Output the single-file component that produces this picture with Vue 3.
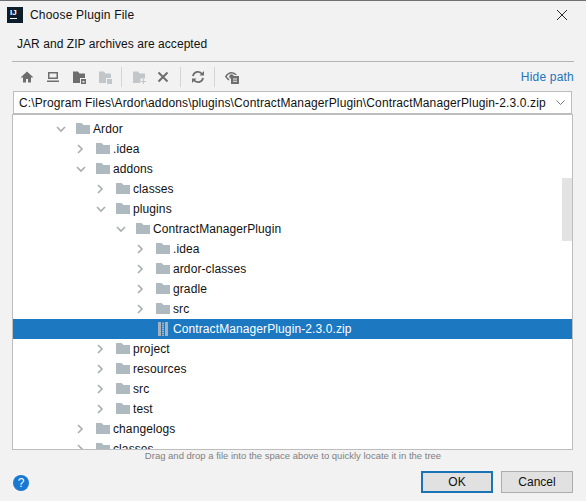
<script setup>
import { ref } from "vue";

const rows = ref([
  { name: "Ardor", depth: 0, open: true },
  { name: ".idea", depth: 1 },
  { name: "addons", depth: 1, open: true },
  { name: "classes", depth: 2 },
  { name: "plugins", depth: 2, open: true },
  { name: "ContractManagerPlugin", depth: 3, open: true },
  { name: ".idea", depth: 4 },
  { name: "ardor-classes", depth: 4 },
  { name: "gradle", depth: 4 },
  { name: "src", depth: 4 },
  { name: "ContractManagerPlugin-2.3.0.zip", depth: 4, file: true, selected: true },
  { name: "project", depth: 2 },
  { name: "resources", depth: 2 },
  { name: "src", depth: 2 },
  { name: "test", depth: 2 },
  { name: "changelogs", depth: 1 },
  { name: "classes", depth: 1 },
]);

const pathValue = "C:\\Program Files\\Ardor\\addons\\plugins\\ContractManagerPlugin\\ContractManagerPlugin-2.3.0.zip";

function rowIndent(row) {
  return { paddingLeft: 53 + row.depth * 20 + "px" };
}
</script>

<template>
  <div class="dialog">
    <header class="titlebar">
      <span class="logo"><span class="logo-text">IJ</span><span class="logo-bar"></span></span>
      <span class="title">Choose Plugin File</span>
      <svg class="close" width="12" height="12" viewBox="0 0 12 12">
        <path d="M1 1L11 11M11 1L1 11" stroke="#2b2b2b" stroke-width="1" fill="none" />
      </svg>
    </header>

    <p class="desc">JAR and ZIP archives are accepted</p>
    <div class="rule"></div>

    <div class="toolbar">
      <div class="tools">
        <button class="tool">
          <svg width="16" height="16" viewBox="0 0 16 16"><path d="M8 2.5L1.5 8.5H4V13.5H7V10H9V13.5H12V8.5H14.5Z" fill="#6e6e6e" /></svg>
        </button>
        <button class="tool">
          <svg width="16" height="16" viewBox="0 0 16 16"><path d="M3 3H13V10H3ZM4.5 4.5V8.5H11.5V4.5ZM2 11.5H14V13H2Z" fill="#6e6e6e" fill-rule="evenodd" /></svg>
        </button>
        <button class="tool">
          <svg width="16" height="16" viewBox="0 0 16 16"><path d="M2 2.5H7L8.5 4.5H14V9H9V14H2Z" fill="#6e6e6e" /><path d="M10 10H15V15H10ZM11.5 12V13.5H13.5V12Z" fill="#6e6e6e" fill-rule="evenodd" /></svg>
        </button>
        <button class="tool before-sep">
          <svg width="16" height="16" viewBox="0 0 16 16"><path d="M2 2.5H7L8.5 4.5H14V9H9V14H2Z" fill="#c2c6c9" /><path d="M10 10H15V15H10Z" fill="#c2c6c9" /></svg>
        </button>
        <span class="sep"></span>
        <button class="tool tight">
          <svg width="16" height="16" viewBox="0 0 16 16"><path d="M2 2.5H7L8.5 4.5H14V9.5H9.5V14H2Z" fill="#c2c6c9" /><path d="M12 10V12H10V13H12V15H13V13H15V12H13V10Z" fill="#c2c6c9" /></svg>
        </button>
        <button class="tool">
          <svg width="16" height="16" viewBox="0 0 16 16"><path d="M3.5 3.5L12.5 12.5M12.5 3.5L3.5 12.5" stroke="#6e6e6e" stroke-width="2" fill="none" /></svg>
        </button>
        <span class="sep"></span>
        <button class="tool before-sep">
          <svg width="16" height="16" viewBox="0 0 16 16"><path d="M3 7.2A5 5 0 0 1 12.2 5.2" stroke="#6e6e6e" stroke-width="1.8" fill="none" /><path d="M9.5 6.5H14V2Z" fill="#6e6e6e" /><path d="M13 8.8A5 5 0 0 1 3.8 10.8" stroke="#6e6e6e" stroke-width="1.8" fill="none" /><path d="M6.5 9.5H2V14Z" fill="#6e6e6e" /></svg>
        </button>
        <span class="sep"></span>
        <button class="tool">
          <svg width="16" height="16" viewBox="0 0 16 16"><path d="M1 7.5C2.5 4.5 5 3 7.5 3C9.5 3 11.5 4 13 6H11C10 5 8.8 4.5 7.5 4.5C5.5 4.5 4 5.5 2.8 7.5C3.5 8.6 4.3 9.4 5.2 10V11.6C3.5 10.8 2 9.4 1 7.5Z" fill="#6e6e6e" /><circle cx="7.5" cy="7.5" r="2.2" fill="#6e6e6e" /><path d="M7 7H15V15H7ZM9 9.5V10.5H13V9.5ZM9 11.7V12.7H13V11.7Z" fill="#6e6e6e" fill-rule="evenodd" /></svg>
        </button>
      </div>
      <a class="hide-path">Hide path</a>
    </div>

    <div class="combo">
      <span class="combo-value">{{ pathValue }}</span>
      <svg width="9" height="6" viewBox="0 0 9 6"><path d="M.5 .5L4.5 4.5L8.5 .5" stroke="#777" fill="none" /></svg>
    </div>

    <div class="tree">
      <div
        v-for="(row, i) in rows"
        :key="i"
        class="row"
        :class="{ selected: row.selected }"
        :style="rowIndent(row)"
      >
        <span class="arrow">
          <svg v-if="row.open" width="10" height="10" viewBox="0 0 10 10"><path d="M1 3L5 7L9 3" stroke="#a8adb0" stroke-width="1.6" fill="none" /></svg>
          <svg v-else-if="!row.file" width="10" height="10" viewBox="0 0 10 10"><path d="M2 1L6 5L2 9" stroke="#a8adb0" stroke-width="1.6" fill="none" /></svg>
        </span>
        <svg v-if="row.file" class="icon" width="16" height="16" viewBox="0 0 16 16">
          <path d="M2 1H12V15H2Z" fill="#a5b2bd" />
          <path d="M7 1V15" stroke="#3f9bd8" stroke-width="2" stroke-dasharray="1 1" />
          <path d="M5.5 1V15M8.5 1V15" stroke="#1b78c1" stroke-width="1" />
        </svg>
        <svg v-else class="icon" width="16" height="16" viewBox="0 0 16 16">
          <path d="M0 2H5.5L7.5 4H14V13H0Z" fill="#afb9c0" />
        </svg>
        <span class="label">{{ row.name }}</span>
      </div>
      <div class="scroll-thumb"></div>
    </div>

    <p class="hint">Drag and drop a file into the space above to quickly locate it in the tree</p>

    <footer class="footer">
      <span class="help">?</span>
      <div class="buttons">
        <button class="btn btn-ok">OK</button>
        <button class="btn">Cancel</button>
      </div>
    </footer>
  </div>
</template>

<style>
html, body {
  margin: 0;
  background: #f2f2f2;
}
</style>

<style scoped>
.dialog {
  width: 586px;
  height: 501px;
  box-sizing: border-box;
  border-top: 1px solid #707070;
  background: #f2f2f2;
  font-family: "Liberation Sans", Arial, sans-serif;
  font-size: 12px;
  color: #111;
  overflow: hidden;
}
.titlebar {
  display: flex;
  align-items: center;
  height: 28px;
  padding: 0 18px 0 7px;
}
.logo {
  width: 16px;
  height: 16px;
  background: #0c1d2c;
  display: flex;
  flex-direction: column;
  align-items: flex-start;
  padding: 1px 0 0 3px;
  box-sizing: border-box;
  color: #fff;
}
.logo-text {
  font-size: 8px;
  font-weight: bold;
  line-height: 9px;
}
.logo-bar {
  width: 7px;
  height: 1px;
  background: #fff;
  margin-top: 1px;
}
.title {
  margin-left: 7px;
  flex: 1;
  letter-spacing: 0.2px;
}
.desc {
  margin: 0;
  padding: 8px 0 0 17px;
  height: 25px;
  line-height: 14px;
  box-sizing: border-box;
  letter-spacing: 0.05px;
}
.rule {
  height: 1px;
  margin: 7px 12px 0 12px;
  background: #b5b5b5;
}
.toolbar {
  display: flex;
  align-items: center;
  justify-content: space-between;
  height: 29px;
  padding: 0 12px 0 19px;
}
.tools {
  display: flex;
  align-items: center;
}
.tool {
  width: 16px;
  height: 16px;
  border: 0;
  padding: 0;
  margin-right: 10px;
  background: none;
  display: block;
}
.tool.tight {
  margin-right: 8px;
}
.tool.before-sep {
  margin-right: 9px;
}
.tool svg {
  display: block;
}
.sep {
  width: 1px;
  height: 20px;
  background: #d4d4d4;
  margin: 0 9px 0 -1px;
}
.hide-path {
  color: #2275bb;
  font-size: 12px;
  letter-spacing: 0.2px;
}
.combo {
  display: flex;
  align-items: center;
  justify-content: space-between;
  height: 23px;
  box-sizing: border-box;
  margin: 0 14px 0 13px;
  padding: 0 6px 0 5px;
  border: 1px solid #bdbdbd;
  background: #fff;
}
.combo-value {
  letter-spacing: 0.13px;
  white-space: nowrap;
}
.tree {
  position: relative;
  height: 336px;
  box-sizing: border-box;
  margin: 0 13px 0 12px;
  padding-top: 4px;
  border: 1px solid #bdbdbd;
  background: #fff;
  overflow: hidden;
}
.row {
  display: flex;
  align-items: center;
  height: 20px;
  box-sizing: border-box;
  white-space: nowrap;
}
.row.selected {
  background: #1b78c1;
  color: #fff;
}
.arrow {
  width: 20px;
  margin-left: -10px;
  display: flex;
  justify-content: flex-start;
  flex: none;
}
.icon {
  flex: none;
}
.label {
  margin-left: 1px;
  letter-spacing: 0.1px;
}
.scroll-thumb {
  position: absolute;
  top: 63px;
  right: 0;
  width: 10px;
  height: 63px;
  background: #e3e3e3;
}
.hint {
  margin: 0;
  height: 13px;
  line-height: 12px;
  text-align: center;
  font-size: 9.5px;
  color: #7f7f7f;
}
.footer {
  display: flex;
  align-items: flex-start;
  justify-content: space-between;
  padding: 8px 13px 0 13px;
}
.help {
  width: 16px;
  height: 16px;
  margin-top: 4px;
  border-radius: 50%;
  background: #1a77d2;
  color: #fff;
  font-size: 12px;
  line-height: 16px;
  text-align: center;
}
.buttons {
  display: flex;
  gap: 8px;
}
.btn {
  width: 72px;
  height: 22px;
  box-sizing: border-box;
  border: 1px solid #adadad;
  background: #e1e1e1;
  font-family: inherit;
  font-size: 12px;
  color: #111;
  padding: 0;
}
.btn-ok {
  border: 2px solid #1a74b4;
}
</style>
